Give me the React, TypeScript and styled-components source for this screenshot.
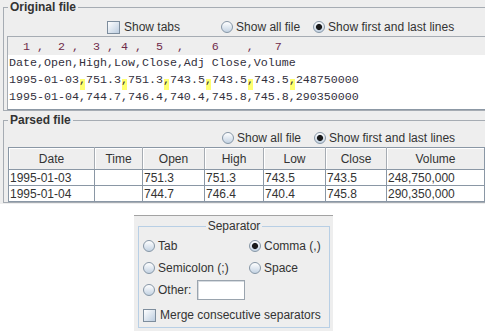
import styled, { createGlobalStyle } from "styled-components";

const GlobalStyle = createGlobalStyle`
	html, body {
		margin: 0;
		padding: 0;
		background: #ffffff;
		overflow: hidden;
	}
	body {
		font-family: "Liberation Sans", Arial, sans-serif;
		font-size: 12px;
		color: #333333;
	}
`;

const Screen = styled.div`
	width: 485px;
	height: 331px;
	overflow: hidden;
	display: flex;
	flex-direction: column;
`;

const TopArea = styled.div`
	flex: none;
	height: 204px;
	background: #eeeeee;
	overflow: hidden;
	padding-left: 3px;
	box-sizing: border-box;
`;

const Group = styled.fieldset<{ $gapTop?: number }>`
	margin: ${(p) => p.$gapTop ?? 0}px 0 0 0;
	padding: 0;
	width: 500px;
	border: 1px solid #a6acb3;
	min-width: 0;
`;

const GroupTitle = styled.legend`
	font-weight: bold;
	font-size: 12px;
	line-height: 14px;
	color: #333333;
	margin-left: 4px;
	padding: 0 2px;
`;

const OptionRow = styled.div<{ $indent: number; $top: number; $height: number }>`
	display: flex;
	align-items: center;
	height: ${(p) => p.$height}px;
	padding: ${(p) => p.$top}px 0 0 ${(p) => p.$indent}px;
	box-sizing: border-box;
`;

const Option = styled.label<{ $gap?: number }>`
	display: flex;
	align-items: center;
	gap: 3px;
	margin-left: ${(p) => p.$gap ?? 0}px;
	white-space: nowrap;
	color: #333333;
`;

const Radio = styled.span<{ $checked?: boolean }>`
	width: 12px;
	height: 12px;
	box-sizing: border-box;
	border-radius: 50%;
	border: 1px solid #8696a6;
	background: ${(p) =>
		p.$checked
			? "radial-gradient(circle, #1a1a1a 0 2.6px, #6d7680 3px, transparent 3.6px), "
			: ""}
		linear-gradient(#ffffff, #c4d3e3);
	flex: none;
`;

const Check = styled.span`
	width: 13px;
	height: 13px;
	box-sizing: border-box;
	border: 1px solid #7d8d9d;
	background: linear-gradient(135deg, #ffffff, #bccde0);
	flex: none;
	margin-right: 1px;
`;

const TextArea = styled.div`
	margin: 0 0 0 3px;
	border-top: 1px solid #a6acb3;
	border-left: 1px solid #a6acb3;
	border-bottom: 1px solid #8c98a5;
	background: #ffffff;
	padding-bottom: 3px;
	font-family: "Liberation Mono", "Courier New", monospace;
	font-size: 11.67px;
	white-space: pre;
`;

const Ruler = styled.div`
	height: 18px;
	line-height: 20px;
	background: #eeeeee;
	color: #6e2a4a;
	padding-left: 1px;
`;

const Line = styled.div`
	height: 17px;
	line-height: 17px;
	color: #33303d;
	padding-left: 1px;
`;

const Sep = styled.span`
	display: inline-block;
	height: 19px;
	line-height: 17px;
	vertical-align: baseline;
	background: linear-gradient(#ffff70, #ffff70) no-repeat 1px 7px / 5px 11px;
`;

const Table = styled.table`
	margin-left: 4px;
	border-collapse: collapse;
	table-layout: fixed;
	width: 477px;
	background: #ffffff;
	border: 1px solid #8a97a5;
`;

const Col = styled.col<{ $w?: number }>`
	width: ${(p) => (p.$w ? `${p.$w}px` : "auto")};
`;

const HeadRow = styled.tr`
	height: 22px;
`;

const BodyRow = styled.tr`
	height: 16px;
`;

const HeadCell = styled.th`
	padding: 0;
	line-height: 14px;
	font-weight: normal;
	text-align: center;
	background: #eeeeee;
	color: #333333;
	border-left: 1px solid #a6acb3;
	border-bottom: 1px solid #8a97a5;
	box-shadow: inset 1px 1px 0 #ffffff;
	&:first-child {
		border-left: none;
	}
`;

const Cell = styled.td`
	padding: 0 0 0 1px;
	line-height: 14px;
	color: #333333;
	border: 1px solid #8a97a5;
	white-space: nowrap;
	overflow: hidden;
`;

const LowerArea = styled.div`
	flex: none;
	padding: 11px 0 0 134px;
`;

const SeparatorPanel = styled.div`
	width: 199px;
	height: 130px;
	box-sizing: border-box;
	background: #eeeeee;
	border-top: 1px solid #a3a3a3;
	padding: 3px 3px 0 4px;
`;

const SeparatorBox = styled.fieldset`
	margin: 0;
	padding: 2px 4px 0 4px;
	border: 1px solid #b8cfe5;
	min-width: 0;
`;

const SeparatorTitle = styled.legend`
	margin: 0 auto;
	padding: 0 2px;
	line-height: 14px;
	font-size: 12px;
	color: #333333;
`;

const SeparatorGrid = styled.div`
	display: grid;
	grid-template-columns: 106px auto;
	grid-template-rows: 21px 23px 21px 27px;
	align-items: center;
`;

const Wide = styled.div`
	grid-column: 1 / span 2;
	align-self: end;
	padding-bottom: 5px;
`;

const OtherInput = styled.span`
	display: inline-block;
	width: 48px;
	height: 20px;
	box-sizing: border-box;
	margin-left: 3px;
	background: #ffffff;
	border: 1px solid #9aa4ae;
	box-shadow: inset 1px 1px 0 #d6dbe0;
`;

const RULER = "  1 ,  2 ,  3 , 4 ,  5  ,    6    ,   7";

const columns: [string, number | undefined][] = [
	["Date", 86],
	["Time", 48],
	["Open", 62],
	["High", 59],
	["Low", 62],
	["Close", 61],
	["Volume", undefined]
];

const rows = [
	["1995-01-03", "", "751.3", "751.3", "743.5", "743.5", "248,750,000"],
	["1995-01-04", "", "744.7", "746.4", "740.4", "745.8", "290,350,000"]
];

const highlighted = (line: string) =>
	line.split(",").map((part, i) => (
		<span key={i}>
			{i > 0 && <Sep>,</Sep>}
			{part}
		</span>
	));

const App = () => {
	return (
		<Screen>
			<GlobalStyle />
			<TopArea>
				<Group>
					<GroupTitle>Original file</GroupTitle>
					<OptionRow $indent={103} $top={4} $height={22}>
						<Option>
							<Check />
							Show tabs
						</Option>
						<Option $gap={41}>
							<Radio />
							Show all file
						</Option>
						<Option $gap={13}>
							<Radio $checked />
							Show first and last lines
						</Option>
					</OptionRow>
					<TextArea>
						<Ruler>{RULER}</Ruler>
						<Line>Date,Open,High,Low,Close,Adj Close,Volume</Line>
						<Line>{highlighted("1995-01-03,751.3,751.3,743.5,743.5,743.5,248750000")}</Line>
						<Line>1995-01-04,744.7,746.4,740.4,745.8,745.8,290350000</Line>
					</TextArea>
				</Group>
				<Group $gapTop={2}>
					<GroupTitle>Parsed file</GroupTitle>
					<OptionRow $indent={218} $top={2} $height={20}>
						<Option>
							<Radio />
							Show all file
						</Option>
						<Option $gap={13}>
							<Radio $checked />
							Show first and last lines
						</Option>
					</OptionRow>
					<Table>
						<colgroup>
							{columns.map(([name, w]) => (
								<Col key={name} $w={w} />
							))}
						</colgroup>
						<thead>
							<HeadRow>
								{columns.map(([name]) => (
									<HeadCell key={name}>{name}</HeadCell>
								))}
							</HeadRow>
						</thead>
						<tbody>
							{rows.map((r) => (
								<BodyRow key={r[0]}>
									{r.map((v, i) => (
										<Cell key={i}>{v}</Cell>
									))}
								</BodyRow>
							))}
						</tbody>
					</Table>
				</Group>
			</TopArea>
			<LowerArea>
				<SeparatorPanel>
					<SeparatorBox>
						<SeparatorTitle>Separator</SeparatorTitle>
						<SeparatorGrid>
							<Option>
								<Radio />
								Tab
							</Option>
							<Option>
								<Radio $checked />
								Comma (,)
							</Option>
							<Option>
								<Radio />
								Semicolon (;)
							</Option>
							<Option>
								<Radio />
								Space
							</Option>
							<Option>
								<Radio />
								Other:
								<OtherInput />
							</Option>
							<span />
							<Wide>
								<Option>
									<Check />
									Merge consecutive separators
								</Option>
							</Wide>
						</SeparatorGrid>
					</SeparatorBox>
				</SeparatorPanel>
			</LowerArea>
		</Screen>
	);
};

export default App;
